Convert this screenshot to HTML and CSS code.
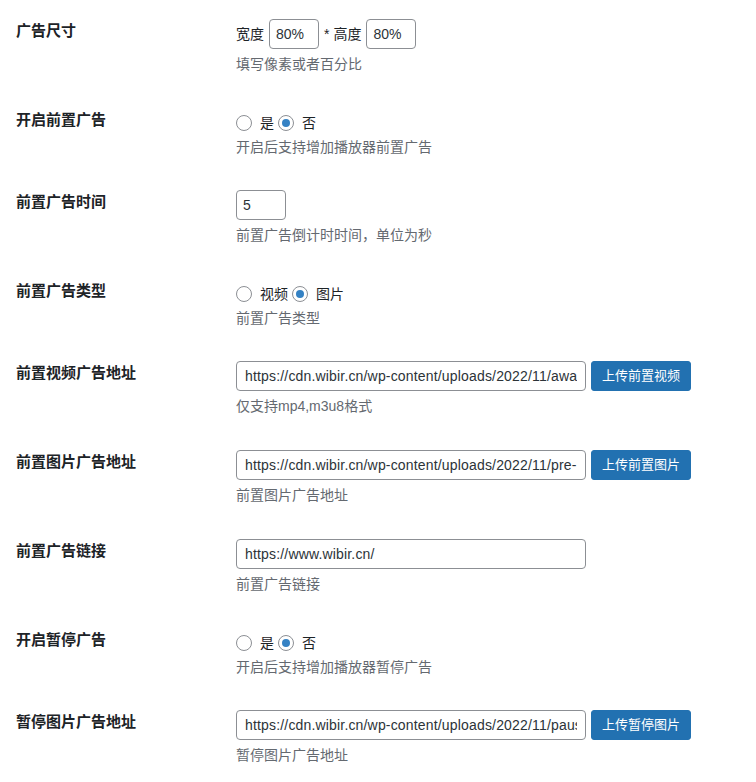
FILE: index.html
```html
<!DOCTYPE html>
<html lang="zh-CN">
<head>
<meta charset="utf-8">
<title>广告设置</title>
<link rel="stylesheet" href="styles.css">
</head>
<body>
<div class="form-table">
  <div class="row row-input">
    <div class="th">广告尺寸</div>
    <div class="td">
      <div class="field">
        <span class="txt">宽度</span>
        <input class="small-text dim-w" type="text" value="80%">
        <span class="txt star">*</span>
        <span class="txt dim-label">高度</span>
        <input class="small-text dim-h" type="text" value="80%">
      </div>
      <p class="description">填写像素或者百分比</p>
    </div>
  </div>

  <div class="row row-radio">
    <div class="th">开启前置广告</div>
    <div class="td">
      <div class="radios">
        <input type="radio" name="pre_on" value="1"><span class="txt">是</span>
        <input type="radio" name="pre_on" value="0" checked><span class="txt">否</span>
      </div>
      <p class="description">开启后支持增加播放器前置广告</p>
    </div>
  </div>

  <div class="row row-input">
    <div class="th">前置广告时间</div>
    <div class="td">
      <div class="field">
        <input class="small-text" type="text" value="5">
      </div>
      <p class="description">前置广告倒计时时间，单位为秒</p>
    </div>
  </div>

  <div class="row row-radio">
    <div class="th">前置广告类型</div>
    <div class="td">
      <div class="radios">
        <input type="radio" name="pre_type" value="video"><span class="txt">视频</span>
        <input type="radio" name="pre_type" value="image" checked><span class="txt">图片</span>
      </div>
      <p class="description">前置广告类型</p>
    </div>
  </div>

  <div class="row row-input">
    <div class="th">前置视频广告地址</div>
    <div class="td">
      <div class="field">
        <input class="regular-text" type="text" value="https://cdn.wibir.cn/wp-content/uploads/2022/11/awa">
        <button class="button-primary" type="button">上传前置视频</button>
      </div>
      <p class="description">仅支持mp4,m3u8格式</p>
    </div>
  </div>

  <div class="row row-input">
    <div class="th">前置图片广告地址</div>
    <div class="td">
      <div class="field">
        <input class="regular-text" type="text" value="https://cdn.wibir.cn/wp-content/uploads/2022/11/pre-">
        <button class="button-primary" type="button">上传前置图片</button>
      </div>
      <p class="description">前置图片广告地址</p>
    </div>
  </div>

  <div class="row row-input">
    <div class="th">前置广告链接</div>
    <div class="td">
      <div class="field">
        <input class="regular-text" type="text" value="https://www.wibir.cn/">
      </div>
      <p class="description">前置广告链接</p>
    </div>
  </div>

  <div class="row row-radio">
    <div class="th">开启暂停广告</div>
    <div class="td">
      <div class="radios">
        <input type="radio" name="pause_on" value="1"><span class="txt">是</span>
        <input type="radio" name="pause_on" value="0" checked><span class="txt">否</span>
      </div>
      <p class="description">开启后支持增加播放器暂停广告</p>
    </div>
  </div>

  <div class="row row-input">
    <div class="th">暂停图片广告地址</div>
    <div class="td">
      <div class="field">
        <input class="regular-text" type="text" value="https://cdn.wibir.cn/wp-content/uploads/2022/11/paus">
        <button class="button-primary" type="button">上传暂停图片</button>
      </div>
      <p class="description">暂停图片广告地址</p>
    </div>
  </div>
</div>
</body>
</html>
```

FILE: styles.css
```css
html, body {
  margin: 0;
  padding: 0;
  background: #ffffff;
}

body {
  font-family: "Liberation Sans", "Noto Sans CJK SC", sans-serif;
  font-size: 14px;
  color: #1d2327;
}

.form-table {
  padding: 2px 0 0 16px;
}

.row {
  display: flex;
  align-items: flex-start;
}

.th {
  width: 200px;
  flex: none;
  padding: 20px 10px 20px 0;
  font-size: 15px;
  font-weight: 700;
  line-height: 18.2px;
  color: #1d2327;
}

.td {
  flex: 1;
  padding: 15px 10px 17px;
}

.row-radio .td {
  padding: 16px 10px 16px;
}

.field {
  display: flex;
  align-items: center;
  height: 34px;
  gap: 5px;
}

.txt {
  line-height: 20px;
  white-space: nowrap;
}

.dim-w {
  margin-left: -1px;
}

.star {
  margin-left: 0;
}

.dim-label {
  margin-left: -1px;
}

.dim-h {
  margin-left: 1px;
}

input[type="text"] {
  box-sizing: border-box;
  height: 30px;
  margin: 0;
  padding: 0 8px;
  border: 1px solid #8c8f94;
  border-radius: 4px;
  background: #ffffff;
  color: #2c3338;
  font-family: "Liberation Sans", "Noto Sans CJK SC", sans-serif;
  font-size: 14px;
  outline: none;
}

input.small-text {
  width: 50px;
  padding: 0 6px;
}

input.regular-text {
  width: 350px;
  letter-spacing: 0.17px;
}

.button-primary {
  box-sizing: border-box;
  height: 30px;
  margin: 0;
  padding: 0 10px;
  border: 1px solid #2271b1;
  border-radius: 3px;
  background: #2271b1;
  color: #ffffff;
  font-family: "Liberation Sans", "Noto Sans CJK SC", sans-serif;
  font-size: 13px;
  line-height: 28px;
  white-space: nowrap;
  cursor: pointer;
}

.radios {
  display: flex;
  align-items: center;
  box-sizing: border-box;
  height: 27px;
  padding-top: 5px;
}

input[type="radio"] {
  -webkit-appearance: none;
  appearance: none;
  box-sizing: border-box;
  position: relative;
  width: 16px;
  height: 16px;
  margin: 0 8px 0 4px;
  padding: 0;
  border: 1px solid #8c8f94;
  border-radius: 50%;
  background: #ffffff;
  flex: none;
}

input[type="radio"]:first-child {
  margin-left: 0;
}

input[type="radio"]:checked::before {
  content: "";
  position: absolute;
  left: 3px;
  top: 3px;
  width: 8px;
  height: 8px;
  border-radius: 50%;
  background: #3582c4;
}

.description {
  margin: 3px 0 0;
  font-size: 14px;
  line-height: 20px;
  color: #646970;
}
```
